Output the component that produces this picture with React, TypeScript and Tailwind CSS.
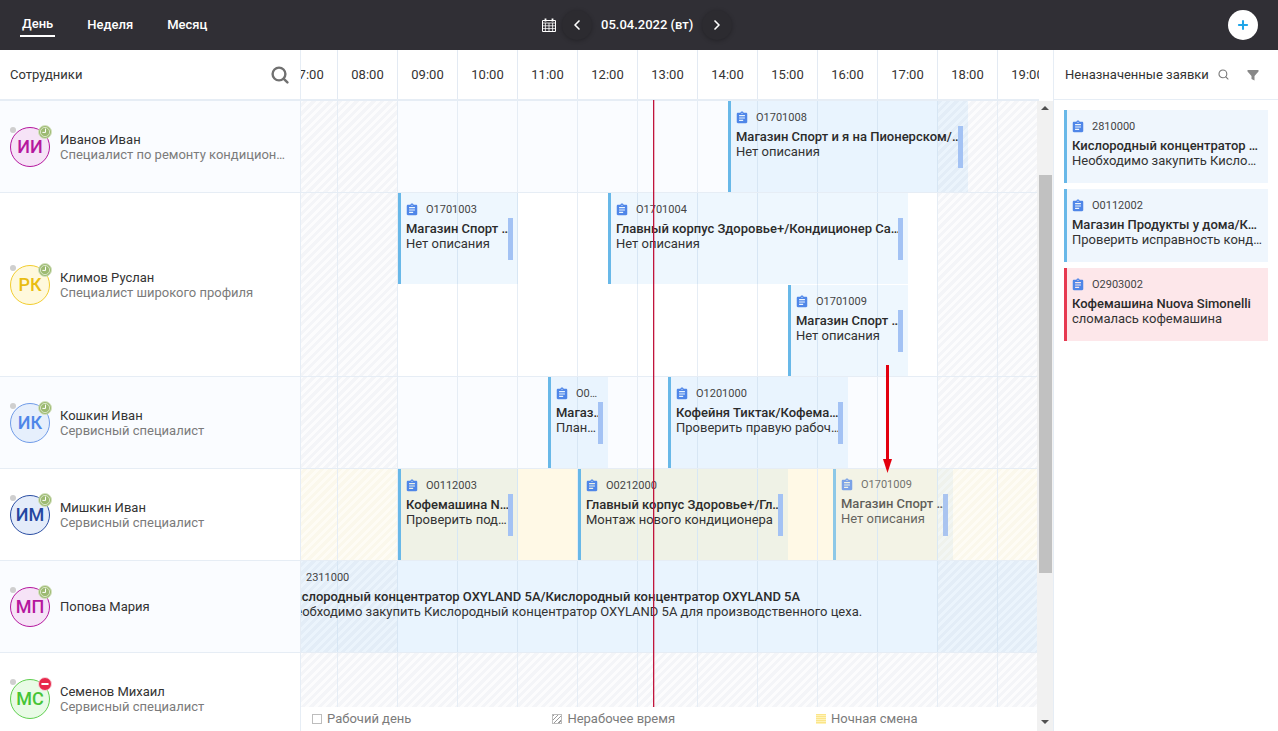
import { ChevronLeft, ChevronRight, Plus } from 'lucide-react'

const hours = ['07:00', '08:00', '09:00', '10:00', '11:00', '12:00', '13:00', '14:00', '15:00', '16:00', '17:00', '18:00', '19:00']

interface Task {
  id: string
  title: string
  text: string
  left: number
  width: number
  lane?: number
  ghost?: boolean
  noHandle?: boolean
}

interface Employee {
  initials: string
  name: string
  role?: string
  avatar: string
  tint: boolean
  busy?: boolean
  height: string
  cells: 'plain' | 'night' | 'off'
  tasks: Task[]
}

const employees: Employee[] = [
  {
    initials: 'ИИ', name: 'Иванов Иван', role: 'Специалист по ремонту кондиционеров',
    avatar: 'bg-[#f6e3f7] border-[#b5179e] text-[#b5179e]', tint: true, height: 'h-[92px]', cells: 'plain',
    tasks: [{ id: 'O1701008', title: 'Магазин Спорт и я на Пионерском/Кондиционер', text: 'Нет описания', left: 427, width: 240 }],
  },
  {
    initials: 'РК', name: 'Климов Руслан', role: 'Специалист широкого профиля',
    avatar: 'bg-[#fff9dc] border-[#f2cd2e] text-[#e9bd12]', tint: false, height: 'h-[184px]', cells: 'plain',
    tasks: [
      { id: 'O1701003', title: 'Магазин Спорт и я', text: 'Нет описания', left: 97, width: 120 },
      { id: 'O1701004', title: 'Главный корпус Здоровье+/Кондиционер Самсунг', text: 'Нет описания', left: 307, width: 300 },
      { id: 'O1701009', title: 'Магазин Спорт и я', text: 'Нет описания', left: 487, width: 120, lane: 1 },
    ],
  },
  {
    initials: 'ИК', name: 'Кошкин Иван', role: 'Сервисный специалист',
    avatar: 'bg-[#e6effc] border-[#6f9be8] text-[#4f86e8]', tint: true, height: 'h-[92px]', cells: 'plain',
    tasks: [
      { id: 'O0112005', title: 'Магазин Спорт', text: 'Плановый осмотр', left: 247, width: 60 },
      { id: 'O1201000', title: 'Кофейня Тиктак/Кофемашина', text: 'Проверить правую рабочую группу', left: 367, width: 180 },
    ],
  },
  {
    initials: 'ИМ', name: 'Мишкин Иван', role: 'Сервисный специалист',
    avatar: 'bg-[#e4ecfa] border-[#2a4ea3] text-[#2546a0]', tint: false, height: 'h-[92px]', cells: 'night',
    tasks: [
      { id: 'O0112003', title: 'Кофемашина Nuova Simonelli', text: 'Проверить подачу воды', left: 97, width: 120 },
      { id: 'O0212000', title: 'Главный корпус Здоровье+/Главный кондиционер', text: 'Монтаж нового кондиционера', left: 277, width: 210 },
      { id: 'O1701009', title: 'Магазин Спорт и я', text: 'Нет описания', left: 532, width: 120, ghost: true },
    ],
  },
  {
    initials: 'МП', name: 'Попова Мария',
    avatar: 'bg-[#f6e3f7] border-[#b5179e] text-[#b5179e]', tint: true, height: 'h-[92px]', cells: 'plain',
    tasks: [{
      id: '2311000', title: 'Кислородный концентратор OXYLAND 5A/Кислородный концентратор OXYLAND 5A',
      text: 'Необходимо закупить Кислородный концентратор OXYLAND 5A для производственного цеха.',
      left: -23, width: 800, noHandle: true,
    }],
  },
  {
    initials: 'МС', name: 'Семенов Михаил', role: 'Сервисный специалист',
    avatar: 'bg-[#e9fbe6] border-[#5fcf4f] text-[#46c436]', tint: false, busy: true, height: 'h-[92px]', cells: 'off',
    tasks: [],
  },
]

const unassigned = [
  { id: '2810000', title: 'Кислородный концентратор OXYLAND 5A', text: 'Необходимо закупить Кислородный концентратор' },
  { id: 'O0112002', title: 'Магазин Продукты у дома/Кондиционер', text: 'Проверить исправность кондиционера' },
  { id: 'O2903002', title: 'Кофемашина Nuova Simonelli', text: 'сломалась кофемашина', urgent: true },
]

function AssignmentIcon() {
  return (
    <svg viewBox="0 0 24 24" className="w-[14px] h-[14px] shrink-0 -ml-[1px] fill-[#4f86e8]">
      <path d="M19 3h-4.18C14.4 1.84 13.3 1 12 1c-1.3 0-2.4.84-2.82 2H5c-1.1 0-2 .9-2 2v14c0 1.1.9 2 2 2h14c1.1 0 2-.9 2-2V5c0-1.1-.9-2-2-2zm-7 0c.55 0 1 .45 1 1s-.45 1-1 1-1-.45-1-1 .45-1 1-1zm2 14H7v-2h7v2zm3-4H7v-2h10v2zm0-4H7V7h10v2z" />
    </svg>
  )
}

function SearchIcon({ size, color, width }: { size: number; color: string; width: number }) {
  return (
    <svg viewBox="0 0 18 18" width={size} height={size} fill="none" stroke={color} strokeWidth={width} strokeLinecap="round">
      <circle cx="8" cy="8" r="6.4" />
      <path d="M12.8 12.8L16.4 16.4" />
    </svg>
  )
}

function CalendarIcon() {
  return (
    <svg viewBox="0 0 14 14" className="w-[14px] h-[14px] stroke-white fill-none" strokeWidth="1">
      <path d="M0.5 2.5h13v11h-13z" />
      <path d="M0.5 5h13M0.5 7.8h13M0.5 10.6h13M3.4 5v8.5M7 5v8.5M10.6 5v8.5" strokeWidth="0.8" />
      <path d="M3.5 0.5v3M10.5 0.5v3" strokeWidth="1.8" />
    </svg>
  )
}

function StatusBadge({ busy }: { busy?: boolean }) {
  return (
    <svg viewBox="0 0 14 14" className="absolute right-[-3px] top-[-3px] w-[14px] h-[14px]">
      {busy ? (
        <>
          <circle cx="7" cy="7" r="6.5" fill="#e8274b" stroke="#f7d5dc" />
          <rect x="3.4" y="6" width="7.2" height="2" rx="0.6" fill="#fff" />
        </>
      ) : (
        <>
          <circle cx="7" cy="7" r="6.5" fill="#9dba72" stroke="#d5e2c2" />
          <circle cx="7" cy="7" r="4.6" fill="none" stroke="#f1f6ea" strokeWidth="0.7" />
          <path d="M7.5 3.6v3.8H4.4" fill="none" stroke="#fff" strokeWidth="1" />
        </>
      )}
    </svg>
  )
}

function TaskCard({ task, night }: { task: Task; night: boolean }) {
  const top = task.lane ? 'top-[92px]' : 'top-0'
  return (
    <div
      className={`absolute ${top} h-[91px] border-l-[3px] border-[#68b8e8] ${night ? 'bg-[#2196f3]/[0.07]' : 'bg-[#2196f3]/[0.08]'} pl-[5px] pr-[5px]`}
      style={{ left: task.left, width: task.width, opacity: task.ghost ? 0.75 : 1 }}
    >
      <div className={`flex items-center h-[14px] ${task.ghost ? 'mt-[9px]' : 'mt-[10px]'} text-[11px] leading-[14px] text-[#444]`}>
        <AssignmentIcon />
        <span className="ml-[7px] truncate">{task.id}</span>
      </div>
      <div className="mt-[4px] text-[13px] leading-[15px] font-medium text-[#2b2b2b] truncate">{task.title}</div>
      <div className="text-[13px] leading-[15px] text-[#333] truncate">{task.text}</div>
      {!task.noHandle && (
        <div className={`absolute right-[5px] top-[25px] w-[5px] h-[42px] ${task.ghost ? 'bg-[#8fb3f0]' : 'bg-[#a3c2f4]'}`} />
      )}
    </div>
  )
}

function TimelineRow({ employee }: { employee: Employee }) {
  const night = employee.cells === 'night'
  return (
    <div className={`relative ${employee.height} border-b border-[#e6edf5]`}>
      <div className="flex h-full -ml-[23px]">
        {hours.map((hour, i) => {
          const off = i < 2 || i > 10 || employee.cells === 'off'
          let bg = employee.tint ? 'bg-[#fafcff]' : 'bg-white'
          if (night) bg = 'bg-[#fff9e6]'
          if (off) {
            bg = night
              ? 'bg-[repeating-linear-gradient(135deg,#fbf8ec_0,#fbf8ec_3px,#fefcf5_3px,#fefcf5_6px)]'
              : 'bg-[repeating-linear-gradient(135deg,#f4f5f8_0,#f4f5f8_3px,#fcfcfd_3px,#fcfcfd_6px)]'
          }
          return <div key={hour} className={`w-[60px] shrink-0 border-r border-[#e6edf5] ${bg}`} />
        })}
      </div>
      {employee.tasks.map((task) => (
        <TaskCard key={task.id + task.left} task={task} night={night} />
      ))}
    </div>
  )
}

export default function App() {
  return (
    <div className="h-[731px] overflow-hidden bg-white flex flex-col text-[13px] font-['Roboto',sans-serif]">
      <header className="h-[50px] shrink-0 bg-[#302f35] flex items-center text-white relative">
        <nav className="flex items-center font-medium pl-[20px]">
          <span className="px-[2px] h-[24px] leading-[22px] border-b-2 border-white">День</span>
          <span className="ml-[32px] leading-[22px]">Неделя</span>
          <span className="ml-[34px] leading-[22px]">Месяц</span>
        </nav>
        <div className="absolute left-[542px] top-[10px] flex items-center">
          <CalendarIcon />
          <button className="ml-[6px] w-[30px] h-[30px] rounded-full bg-[#2c2b30] shadow-[0_1px_4px_rgba(0,0,0,0.25)] flex items-center justify-center">
            <ChevronLeft className="w-[16px] h-[16px]" strokeWidth={2.5} />
          </button>
          <span className="ml-[9px] w-[92px] font-medium whitespace-nowrap">05.04.2022 (вт)</span>
          <button className="ml-[9px] w-[30px] h-[30px] rounded-full bg-[#2c2b30] shadow-[0_1px_4px_rgba(0,0,0,0.25)] flex items-center justify-center">
            <ChevronRight className="w-[16px] h-[16px]" strokeWidth={2.5} />
          </button>
        </div>
        <button className="ml-auto mr-[20px] w-[30px] h-[30px] rounded-full bg-white flex items-center justify-center">
          <Plus className="w-[14px] h-[14px] text-[#1fa5e8]" strokeWidth={3.5} />
        </button>
      </header>

      <div className="flex-1 flex min-h-0">
        <aside className="w-[301px] shrink-0 border-r border-[#e6edf5] text-[#333]">
          <div className="h-[51px] border-b-2 border-[#e6edf5] flex items-center justify-between pl-[10px] pr-[11px]">
            <span>Сотрудники</span>
            <SearchIcon size={18} color="#707070" width={2.4} />
          </div>
          {employees.map((e) => (
            <div key={e.name} className={`${e.height} border-b border-[#e6edf5] flex items-center pl-[10px] ${e.tint ? 'bg-[#fafcff]' : 'bg-white'}`}>
              <div className={`relative w-[40px] h-[40px] rounded-full border flex items-center justify-center text-[18px] font-medium ${e.avatar}`}>
                {e.initials}
                <span className="absolute left-[-1px] top-[-1px] w-[6px] h-[6px] rounded-full bg-[#cfcfcf]" />
                <StatusBadge busy={e.busy} />
              </div>
              <div className={`ml-[10px] w-[228px] ${e.role ? 'pb-[1px]' : ''}`}>
                <div className={`truncate text-[#333] leading-[16px] ${e.role ? 'pt-[2px]' : ''}`}>{e.name}</div>
                {e.role && <div className="-mt-[1px] truncate leading-[15px] text-[#7b7b7b]">{e.role}</div>}
              </div>
            </div>
          ))}
        </aside>

        <main className="relative w-[738px] shrink-0 overflow-hidden">
          <div className="h-[51px] border-b-2 border-[#e6edf5] flex -ml-[23px] text-[#333]">
            {hours.map((hour) => (
              <div key={hour} className="w-[60px] shrink-0 border-r border-[#e3eaf3] flex items-center justify-center">{hour}</div>
            ))}
          </div>
          {employees.map((e) => (
            <TimelineRow key={e.name} employee={e} />
          ))}
          <div className="absolute left-[352px] top-[50px] bottom-0 w-[1px] bg-[#c0143c] shadow-[1px_0_0_rgba(200,20,60,0.3)]" />
          <svg viewBox="0 0 10 108" className="absolute left-[581px] top-[315px] w-[10px] h-[108px]">
            <path d="M5.5 0v96" stroke="#e3000f" strokeWidth="3" />
            <path d="M1 94h9L5.5 108z" fill="#e3000f" />
          </svg>
          <div className="absolute left-0 right-0 bottom-0 h-[24px] bg-white flex items-center text-[#7b7b7b]">
            <span className="w-[10px] h-[10px] ml-[11px] border border-[#bdbdbd]" />
            <span className="ml-[5px]">Рабочий день</span>
            <span className="w-[10px] h-[10px] ml-[141px] border border-[#bdbdbd] bg-[repeating-linear-gradient(135deg,#9a9a9a_0,#9a9a9a_1px,#ffffff_1px,#ffffff_3px)]" />
            <span className="ml-[5px]">Нерабочее время</span>
            <span className="w-[10px] h-[10px] ml-[141px] bg-[repeating-linear-gradient(180deg,#fbe58a_0,#fbe58a_1px,#fff3b8_1px,#fff3b8_2px)]" />
            <span className="ml-[5px]">Ночная смена</span>
          </div>
        </main>

        <div className="relative w-[16px] -ml-[2px] shrink-0 flex flex-col">
          <div className="h-[51px]" />
          <div className="flex-1 bg-[#f1f1f1] flex flex-col items-center">
            <span className="mt-[5px] w-0 h-0 border-x-[4px] border-x-transparent border-b-[4px] border-b-[#505050]" />
            <div className="mt-[65px] w-[13px] ml-[1px] h-[398px] bg-[#c1c1c1]" />
            <span className="mt-[147px] w-0 h-0 border-x-[4px] border-x-transparent border-t-[4px] border-t-[#505050]" />
          </div>
        </div>

        <aside className="flex-1 border-l border-[#e6edf5] min-w-0">
          <div className="h-[50px] border-b border-[#e6edf5] flex items-center pl-[11px] text-[#333]">
            <span className="whitespace-nowrap">Неназначенные заявки</span>
            <span className="ml-[9px]"><SearchIcon size={11} color="#777" width={1.8} /></span>
            <svg viewBox="0 0 12 12" className="ml-[18px] w-[12px] h-[12px] fill-[#888]">
              <path d="M0.5 1h11v1.6L7.5 7v4.5L4.5 10V7L0.5 2.6z" />
            </svg>
          </div>
          <div className="flex flex-col gap-[6px] pt-[10px] pl-[10px] pr-[10px]">
            {unassigned.map((card) => (
              <div key={card.id} className={`h-[73px] border-l-[3px] pl-[5px] pr-[5px] ${card.urgent ? 'border-[#e63950] bg-[#fde7ea]' : 'border-[#68b8e8] bg-[#eff6fd]'}`}>
                <div className="flex items-center h-[14px] mt-[10px] text-[11px] leading-[14px] text-[#444]">
                  <AssignmentIcon />
                  <span className="ml-[7px]">{card.id}</span>
                </div>
                <div className="mt-[4px] leading-[15px] font-medium text-[#2b2b2b] truncate">{card.title}</div>
                <div className="leading-[15px] text-[#333] truncate">{card.text}</div>
              </div>
            ))}
          </div>
        </aside>
      </div>
    </div>
  )
}
